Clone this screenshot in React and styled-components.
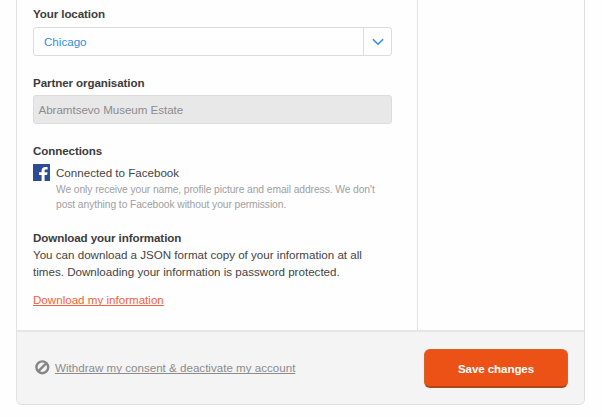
import React from "react";
import styled, { createGlobalStyle } from "styled-components";

const Global = createGlobalStyle`
  * { box-sizing: border-box; }
  body {
    margin: 0;
    background: #fefefe;
    color: #444;
    font: 11.6px/17px "Liberation Sans", Arial, sans-serif;
  }
`;

const Page = styled.main`
  height: 417px;
  padding: 0 17px 12px 16px;
  overflow: hidden;
`;

const Card = styled.form`
  height: 405px;
  display: flex;
  flex-direction: column;
  border: 1px solid #dedede;
  border-top: 0;
  border-left: 1px solid #e2e2e2;
  border-radius: 0 0 6px 6px;
  overflow: hidden;
`;

const Body = styled.div`
  height: 330px;
  display: grid;
  grid-template-columns: 401px 1fr;
`;

const Main = styled.div`
  border-right: 1px solid #e2e2e2;
  padding: 5px 25px 0 16px;
`;

const Section = styled.section`
  height: ${(p) => p.$height}px;
`;

const Heading = styled.h3`
  margin: 0;
  font-size: 11.6px;
  line-height: 17px;
  font-weight: 700;
  letter-spacing: -0.1px;
  color: #3c3c3c;
  white-space: nowrap;
`;

const Select = styled.div`
  display: flex;
  width: 359px;
  height: 29px;
  margin-top: 5px;
  border: 1px solid #dcdcdc;
  border-radius: 3px;
  color: #2f8fe0;
`;

const Value = styled.span`
  flex: 1;
  padding-left: 10px;
  line-height: 28px;
`;

const Toggle = styled.span`
  width: 28px;
  display: flex;
  align-items: center;
  justify-content: center;
  border-left: 1px solid #dcdcdc;
`;

const Disabled = styled.div`
  width: 359px;
  height: 29px;
  margin-top: 4px;
  padding-left: 4.5px;
  border: 1px solid #dcdcdc;
  border-radius: 3px;
  background: #e8e8e8;
  color: #8c8c8c;
  line-height: 28px;
  letter-spacing: -0.04px;
`;

const Connection = styled.div`
  display: flex;
  gap: 6px;
  margin-top: 5px;
  svg { flex: none; }
`;

const Line = styled.div`
  white-space: nowrap;
`;

const Note = styled.div`
  color: #a0a0a0;
  font-size: 10.3px;
  line-height: 15px;
  letter-spacing: -0.09px;
  padding-top: 1px;
`;

const Link = styled.a`
  display: inline-block;
  color: ${(p) => p.$color};
  text-decoration: underline;
  text-underline-offset: 1px;
  text-decoration-skip-ink: none;
  white-space: nowrap;
`;

const Download = styled.div`
  margin-top: 11px;
`;

const Footer = styled.footer`
  flex: 1;
  display: flex;
  align-items: center;
  justify-content: space-between;
  padding: 0 16px 0 18px;
  border-top: 2px solid #e6e6e6;
  background: #f4f4f4;
`;

const Withdraw = styled.div`
  display: flex;
  align-items: center;
  gap: 5px;

  svg { margin-bottom: 1px; }
  a { margin-bottom: 1px; }
`;

const Save = styled.button`
  width: 144px;
  height: 39px;
  padding: 1px 0 0;
  border: 1px solid #d6622e;
  border-bottom: 2px solid #b5461b;
  border-radius: 6px;
  background: #ec5216;
  color: #fff;
  font: 700 11.6px/17px "Liberation Sans", Arial, sans-serif;
  letter-spacing: -0.1px;
`;

const Chevron = () => (
  <svg width="12" height="8" viewBox="0 0 12 8" fill="none" stroke="#2f8fe0" strokeWidth="1.6">
    <path d="M.9 1.2L6 6.2l5.1-5" />
  </svg>
);

const Facebook = () => (
  <svg width="17" height="17" viewBox="0 0 17 17">
    <path fill="#2c4b93" d="M0 0h17v17H0z" />
    <path
      fill="#fff"
      d="M8.6 17v-6H6.1V8.2h2.5V6.7c0-2.5 1.5-3.8 3.8-3.8 1.1 0 1.9.1 2.2.1v2.6h-1.5c-1.2 0-1.5.6-1.5 1.4v1.2h2.9l-.4 2.8h-2.5v6z"
    />
  </svg>
);

const Ban = () => (
  <svg width="15" height="15" viewBox="0 0 15 15" fill="none" stroke="#868686" strokeWidth="2.4">
    <circle cx="7.3" cy="7.3" r="5.9" />
    <path d="M3.2 11.4l8.2-8.2" />
  </svg>
);

export default function App() {
  return (
    <Page>
      <Global />
      <Card>
        <Body>
          <Main>
            <Section $height={69}>
              <Heading>Your location</Heading>
              <Select>
                <Value>Chicago</Value>
                <Toggle><Chevron /></Toggle>
              </Select>
            </Section>
            <Section $height={68}>
              <Heading>Partner organisation</Heading>
              <Disabled>Abramtsevo Museum Estate</Disabled>
            </Section>
            <Section $height={87}>
              <Heading>Connections</Heading>
              <Connection>
                <Facebook />
                <div>
                  <Line>Connected to Facebook</Line>
                  <Note>
                    <Line>We only receive your name, profile picture and email address. We don't</Line>
                    <Line>post anything to Facebook without your permission.</Line>
                  </Note>
                </div>
              </Connection>
            </Section>
            <Section $height={90}>
              <Heading>Download your information</Heading>
              <Line>You can download a JSON format copy of your information at all</Line>
              <Line>times. Downloading your information is password protected.</Line>
              <Download><Link $color="#f4623a">Download my information</Link></Download>
            </Section>
          </Main>
        </Body>
        <Footer>
          <Withdraw>
            <Ban />
            <Link $color="#8c8c8c">Withdraw my consent &amp; deactivate my account</Link>
          </Withdraw>
          <Save type="button">Save changes</Save>
        </Footer>
      </Card>
    </Page>
  );
}
